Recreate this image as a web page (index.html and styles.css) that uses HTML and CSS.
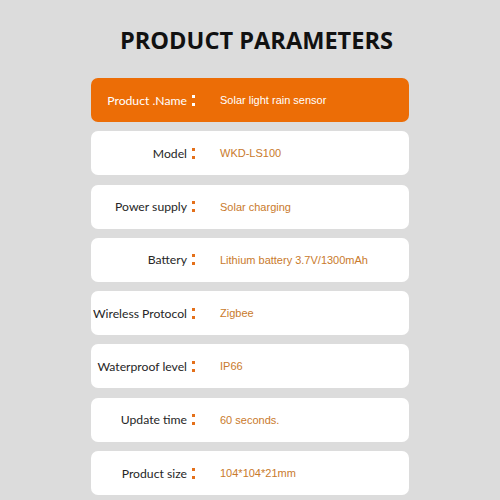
FILE: index.html
```html
<!DOCTYPE html>
<html lang="en">
<head>
<meta charset="utf-8">
<title>Product Parameters</title>
<link rel="stylesheet" href="styles.css">
</head>
<body>
<main class="page">
  <h1 class="title">PRODUCT PARAMETERS</h1>
  <ul class="params">
    <li class="row row-head"><span class="label">Product .Name</span><span class="colon"><i></i><i></i></span><span class="value">Solar light rain sensor</span></li>
    <li class="row"><span class="label">Model</span><span class="colon"><i></i><i></i></span><span class="value">WKD-LS100</span></li>
    <li class="row"><span class="label">Power supply</span><span class="colon"><i></i><i></i></span><span class="value">Solar charging</span></li>
    <li class="row"><span class="label">Battery</span><span class="colon"><i></i><i></i></span><span class="value">Lithium battery 3.7V/1300mAh</span></li>
    <li class="row"><span class="label">Wireless Protocol</span><span class="colon"><i></i><i></i></span><span class="value">Zigbee</span></li>
    <li class="row"><span class="label">Waterproof level</span><span class="colon"><i></i><i></i></span><span class="value">IP66</span></li>
    <li class="row"><span class="label">Update time</span><span class="colon"><i></i><i></i></span><span class="value">60 seconds.</span></li>
    <li class="row"><span class="label">Product size</span><span class="colon"><i></i><i></i></span><span class="value">104*104*21mm</span></li>
  </ul>
</main>
</body>
</html>
```
FILE: styles.css
```css
html, body {
  margin: 0;
  padding: 0;
  background: #dcdcdc;
}
.page {
  width: 500px;
  height: 500px;
  overflow: hidden;
  display: flex;
  flex-direction: column;
  align-items: center;
}
.title {
  margin: 24px 0 0;
  padding-left: 13px;
  font-family: "Open Sans", "Liberation Sans", sans-serif;
  font-weight: 700;
  font-size: 23.6px;
  line-height: 32px;
  color: #111;
  letter-spacing: 0;
}
.params {
  list-style: none;
  margin: 22px 0 0;
  padding: 0;
  width: 318px;
  display: flex;
  flex-direction: column;
  gap: 9.3px;
}
.row {
  height: 44px;
  background: #fff;
  border-radius: 7px;
  display: flex;
  align-items: center;
}
.row-head {
  background: #ec6d06;
}
.label {
  width: 96px;
  text-align: right;
  font-family: "Lato", "Open Sans", sans-serif;
  font-size: 12.2px;
  color: #262626;
  white-space: nowrap;
}
.colon {
  width: 4px;
  margin-left: 5px;
  height: 11px;
  display: flex;
  flex-direction: column;
  justify-content: space-between;
}
.colon i {
  display: block;
  width: 3px;
  height: 3px;
  background: #e4701a;
}
.value {
  margin-left: 24px;
  font-family: "Liberation Sans", Arial, sans-serif;
  font-size: 11px;
  color: #c97a2c;
  white-space: nowrap;
}
.row-head .label,
.row-head .value {
  color: #fff;
}
.row-head .colon i {
  background: #fff;
}
```
